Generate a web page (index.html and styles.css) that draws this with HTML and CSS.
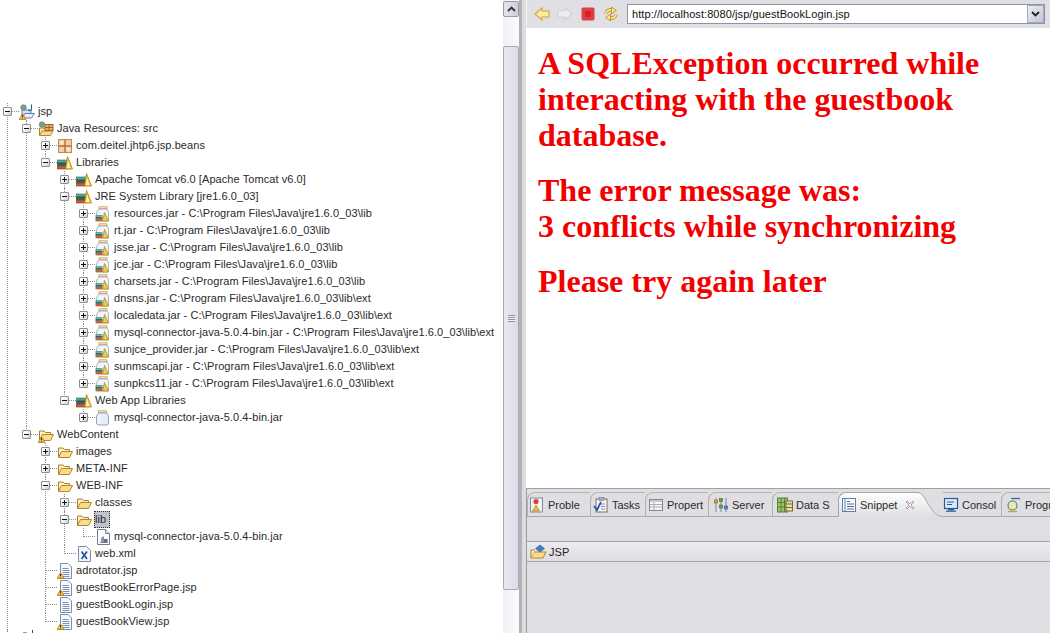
FILE: index.html
```html
<!DOCTYPE html>
<html lang="en">
<head>
<meta charset="utf-8">
<title>Eclipse guestbook</title>
<link rel="stylesheet" href="styles.css">
</head>
<body>
<svg class="defs" width="0" height="0" aria-hidden="true">
  <defs>
    <linearGradient id="tabfill" x1="0" y1="0" x2="0" y2="1"><stop offset="0" stop-color="#ffffff"/><stop offset="1" stop-color="#dfdfe3"/></linearGradient>
    <symbol id="warn" viewBox="0 0 16 16"><path d="M3.5 9.5 L7 15.5 H0z" fill="#f5c33b" stroke="#a8741a" stroke-width=".7"/><path d="M3.5 11v2.2M3.5 14v.7" stroke="#222" stroke-width=".9"/></symbol>
    <symbol id="folder" viewBox="0 0 16 16"><path d="M1.5 13.5 V4 h4.5 l1.5 1.5 h5 V8" fill="#fdf0c0" stroke="#a97f35"/><path d="M1.5 13.5 L4.5 7.5 H15.5 L12.5 13.5z" fill="#fcdc8a" stroke="#b5852f"/></symbol>
    <symbol id="project" viewBox="0 0 16 16"><path d="M3 14 V6 h9 V13z" fill="#cfe0f5" stroke="#6d8cb5"/><path d="M3 14 L6 9.5 H15.5 L12.5 14z" fill="#e9f0fb" stroke="#5f7fb0"/><circle cx="4.5" cy="3.5" r="2.8" fill="#7e9d8f" stroke="#5c7a78" stroke-width=".6"/><path d="M12.5 0.5 V5 a1.5 1.5 0 0 1 -3 .3" fill="none" stroke="#3a5c8c" stroke-width="1.1"/><use href="#warn" x="0" y="0" width="16" height="16"/></symbol>
    <symbol id="srcfolder" viewBox="0 0 16 16"><path d="M1.5 14 V7 h10 V14z" fill="#fdeab0" stroke="#a97f35"/><path d="M1.5 14.5 L4 10 H15 L12.5 14.5z" fill="#fcdc8a" stroke="#b5852f"/><rect x="7" y="3.5" width="8" height="6" fill="#e0b070" stroke="#a0622a"/><path d="M11 3.5v6M7 6.5h8" stroke="#a0622a"/><circle cx="4" cy="3.5" r="2.8" fill="#7e9d8f" stroke="#5c7a78" stroke-width=".6"/></symbol>
    <symbol id="package" viewBox="0 0 16 16"><rect x="1.5" y="1.5" width="13" height="13" fill="#f1d0a4" stroke="#c48a55"/><path d="M8 1.5v13M1.5 8h13" stroke="#b9703a" stroke-width="1.4"/><path d="M3 3h3.5v3.5H3zM9.5 9.5H13V13H9.5z" fill="#f9e8cf"/></symbol>
    <symbol id="library" viewBox="0 0 16 16"><rect x="0.5" y="5" width="9" height="2.6" fill="#54a888" stroke="#2b6a5a" stroke-width=".6"/><rect x="0.5" y="8" width="9" height="2.6" fill="#2f6468" stroke="#1f4048" stroke-width=".6"/><rect x="0.5" y="11" width="9" height="3" fill="#c8602a" stroke="#7a3414" stroke-width=".6"/><path d="M10.5 1.5 L15.5 14 H8.5z" fill="#f3c94a" stroke="#a57d18" stroke-width=".8"/><path d="M11 6 L10 13 h3.5z" fill="#fff2b8"/></symbol>
    <symbol id="jar" viewBox="0 0 16 16"><rect x="4" y="0.8" width="8" height="2" fill="#fbeecb" stroke="#c29c4a" stroke-width=".8"/><path d="M4 3 Q1.5 5 1.5 8 V15 H13.5 V7 Q13.5 4 12 3z" fill="#f3f3fb" stroke="#9aa3b8" stroke-width=".8"/><rect x="0.5" y="9" width="7" height="1.8" fill="#54a888"/><rect x="0.5" y="11" width="7" height="1.8" fill="#2f6468"/><rect x="0.5" y="13" width="7" height="2.2" fill="#c8602a"/><path d="M9.5 6.5 L13.5 15 H7.5z" fill="#f3c94a" stroke="#a57d18" stroke-width=".7"/></symbol>
    <symbol id="plainjar" viewBox="0 0 16 16"><rect x="3.5" y="0.8" width="8" height="2" fill="#fbeecb" stroke="#c29c4a" stroke-width=".8"/><path d="M3.5 3 Q1.5 5 1.5 7 V13 Q1.5 15 4 15 H11 Q13.5 15 13.5 13 V7 Q13.5 5 11.5 3z" fill="#e8eef8" stroke="#8d9cb5" stroke-width=".9"/><path d="M4 6v7" stroke="#fff" stroke-width="1.2"/></symbol>
    <symbol id="jardoc" viewBox="0 0 16 16"><path d="M2.5 .5 H10.5 L14.5 4.5 V15.5 H2.5z" fill="#fdfdff" stroke="#6f7f94"/><path d="M10.5 .5 V4.5 H14.5" fill="#dfe6f0" stroke="#6f7f94"/><path d="M6 13 V9 L9 7 V13z" fill="#8a93a8"/><rect x="9" y="10" width="3.5" height="3" fill="#5f6b85"/><rect x="5" y="13" width="8" height="1" fill="#7a869c"/></symbol>
    <symbol id="xml" viewBox="0 0 16 16"><path d="M2.5 .5 H10.5 L14.5 4.5 V15.5 H2.5z" fill="#f3f7fd" stroke="#7c8fa8"/><path d="M5.5 5.5 L11 13M11 5.5 L5.5 13" stroke="#2b4f9c" stroke-width="1.7"/></symbol>
    <symbol id="jsp" viewBox="0 0 16 16"><path d="M3.5 .5 H11 L14.5 4 V15.5 H3.5z" fill="#f5f8fd" stroke="#7c8fa8"/><path d="M5.5 5.5h6M5.5 7.5h7M5.5 9.5h7M5.5 11.5h7M5.5 13.5h7" stroke="#7d93b5"/></symbol>
    <symbol id="jspwarn" viewBox="0 0 16 16"><use href="#jsp" width="16" height="16"/><use href="#warn" width="16" height="16"/></symbol>
    <symbol id="problems" viewBox="0 0 16 16"><rect x="1.5" y="1" width="12" height="14" fill="#f2f3f8" stroke="#7f8aa0"/><circle cx="7" cy="4.5" r="2.6" fill="#d8453a"/><path d="M7 8 L10.5 14 H3.5z" fill="#f1b73a" stroke="#a8741a" stroke-width=".6"/></symbol>
    <symbol id="tasks" viewBox="0 0 16 16"><rect x="3" y="2" width="11" height="13" fill="#f5f6fb" stroke="#8a6f4a"/><rect x="6" y="0.5" width="5" height="3" fill="#a5afbf" stroke="#6d7686" stroke-width=".6"/><path d="M8 7h4M8 9.5h4M8 12h4" stroke="#8292aa"/><path d="M1 9 L4 13 L8 5" fill="none" stroke="#2a52b0" stroke-width="1.8"/></symbol>
    <symbol id="props" viewBox="0 0 16 16"><rect x="1.5" y="2.5" width="13" height="11" fill="#f6f6f8" stroke="#7d8590"/><rect x="2" y="3" width="12" height="2" fill="#c5cad4"/><path d="M2 7.5h12M2 10h12M6 5v8" stroke="#a8adb8"/></symbol>
    <symbol id="server" viewBox="0 0 16 16"><path d="M3 1v14M8 1v14M13 1v14" stroke="#7d8596" stroke-width="1"/><rect x="1.5" y="3" width="3" height="3" fill="#f0a030" stroke="#85601c" stroke-width=".6"/><rect x="6.5" y="1.5" width="3" height="3" fill="#6fa050" stroke="#3f6a2a" stroke-width=".6"/><rect x="6.5" y="8" width="3" height="3" fill="#6fa050" stroke="#3f6a2a" stroke-width=".6"/><rect x="11.5" y="9" width="3" height="3" fill="#4a86d0" stroke="#2a5a9a" stroke-width=".6"/></symbol>
    <symbol id="datasrc" viewBox="0 0 16 16"><rect x="0.5" y="1" width="10" height="14" fill="#9cc46a" stroke="#54803a"/><path d="M4 1v14M7.5 1v14M.5 5.5h10M.5 10h10" stroke="#54803a"/><rect x="9" y="4" width="6.5" height="10" fill="#e8dfa8" stroke="#7a6a30"/><path d="M9 7h6.5M9 10.5h6.5" stroke="#7a6a30"/></symbol>
    <symbol id="snippet" viewBox="0 0 16 16"><rect x="1.5" y="1.5" width="13" height="13" fill="#fafcff" stroke="#5c7fa8"/><path d="M4 1.5v13" stroke="#5c7fa8"/><path d="M6 4.5h3M6 7h7M6 9.5h7M6 12h7" stroke="#5a6a82"/></symbol>
    <symbol id="console" viewBox="0 0 16 16"><rect x="1.5" y="1.5" width="13" height="10" fill="#dfe9f8" stroke="#2a5a96" stroke-width="1.2"/><path d="M4 5h7M4 7.5h5" stroke="#2a5a96"/><rect x="5" y="12" width="6" height="1.5" fill="#2a5a96"/><rect x="3" y="13.5" width="10" height="1.5" fill="#4a76aa"/></symbol>
    <symbol id="progress" viewBox="0 0 16 16"><path d="M5 1.5h9M7 .5v2M10 .5v2M13 .5v2" stroke="#3a66a8"/><circle cx="6.5" cy="8.5" r="4.5" fill="#f4e6b0" stroke="#3f8a8a" stroke-width="1.2"/><path d="M2 14.5h9" stroke="#c9a23a" stroke-width="1.4"/></symbol>
    <symbol id="pers" viewBox="0 0 18 16"><path d="M1 14 L4 8 H16 L13 14z" fill="#fcdc8a" stroke="#b5852f"/><path d="M1 14 V6 H5" fill="#fdf0c0" stroke="#a97f35"/><path d="M10 1 L14.5 4.5 L10 8 L5.5 4.5z" fill="#3f7fc8" stroke="#2a5a96" stroke-width=".6"/></symbol>
  </defs>
</svg>
<div class="layout">
  <section class="explorer">
    <ul class="tree">
      <li><div class="row"><span class="toggle open"></span><svg class="icon"><use href="#project"/></svg><span class="label">jsp</span></div>
        <ul>
          <li><div class="row"><span class="toggle open"></span><svg class="icon"><use href="#srcfolder"/></svg><span class="label">Java Resources: src</span></div>
            <ul>
              <li><div class="row"><span class="toggle"></span><svg class="icon"><use href="#package"/></svg><span class="label">com.deitel.jhtp6.jsp.beans</span></div></li>
              <li><div class="row"><span class="toggle open"></span><svg class="icon"><use href="#library"/></svg><span class="label">Libraries</span></div>
                <ul>
                  <li><div class="row"><span class="toggle"></span><svg class="icon"><use href="#library"/></svg><span class="label">Apache Tomcat v6.0 [Apache Tomcat v6.0]</span></div></li>
                  <li><div class="row"><span class="toggle open"></span><svg class="icon"><use href="#library"/></svg><span class="label">JRE System Library [jre1.6.0_03]</span></div>
                    <ul>
                      <li><div class="row"><span class="toggle"></span><svg class="icon"><use href="#jar"/></svg><span class="label">resources.jar - C:\Program Files\Java\jre1.6.0_03\lib</span></div></li>
                      <li><div class="row"><span class="toggle"></span><svg class="icon"><use href="#jar"/></svg><span class="label">rt.jar - C:\Program Files\Java\jre1.6.0_03\lib</span></div></li>
                      <li><div class="row"><span class="toggle"></span><svg class="icon"><use href="#jar"/></svg><span class="label">jsse.jar - C:\Program Files\Java\jre1.6.0_03\lib</span></div></li>
                      <li><div class="row"><span class="toggle"></span><svg class="icon"><use href="#jar"/></svg><span class="label">jce.jar - C:\Program Files\Java\jre1.6.0_03\lib</span></div></li>
                      <li><div class="row"><span class="toggle"></span><svg class="icon"><use href="#jar"/></svg><span class="label">charsets.jar - C:\Program Files\Java\jre1.6.0_03\lib</span></div></li>
                      <li><div class="row"><span class="toggle"></span><svg class="icon"><use href="#jar"/></svg><span class="label">dnsns.jar - C:\Program Files\Java\jre1.6.0_03\lib\ext</span></div></li>
                      <li><div class="row"><span class="toggle"></span><svg class="icon"><use href="#jar"/></svg><span class="label">localedata.jar - C:\Program Files\Java\jre1.6.0_03\lib\ext</span></div></li>
                      <li><div class="row"><span class="toggle"></span><svg class="icon"><use href="#jar"/></svg><span class="label">mysql-connector-java-5.0.4-bin.jar - C:\Program Files\Java\jre1.6.0_03\lib\ext</span></div></li>
                      <li><div class="row"><span class="toggle"></span><svg class="icon"><use href="#jar"/></svg><span class="label">sunjce_provider.jar - C:\Program Files\Java\jre1.6.0_03\lib\ext</span></div></li>
                      <li><div class="row"><span class="toggle"></span><svg class="icon"><use href="#jar"/></svg><span class="label">sunmscapi.jar - C:\Program Files\Java\jre1.6.0_03\lib\ext</span></div></li>
                      <li><div class="row"><span class="toggle"></span><svg class="icon"><use href="#jar"/></svg><span class="label">sunpkcs11.jar - C:\Program Files\Java\jre1.6.0_03\lib\ext</span></div></li>
                    </ul>
                  </li>
                  <li><div class="row"><span class="toggle open"></span><svg class="icon"><use href="#library"/></svg><span class="label">Web App Libraries</span></div>
                    <ul>
                      <li><div class="row"><span class="toggle"></span><svg class="icon"><use href="#plainjar"/></svg><span class="label">mysql-connector-java-5.0.4-bin.jar</span></div></li>
                    </ul>
                  </li>
                </ul>
              </li>
            </ul>
          </li>
          <li><div class="row"><span class="toggle open"></span><svg class="icon"><use href="#folder"/><use href="#warn"/></svg><span class="label">WebContent</span></div>
            <ul>
              <li><div class="row"><span class="toggle"></span><svg class="icon"><use href="#folder"/></svg><span class="label">images</span></div></li>
              <li><div class="row"><span class="toggle"></span><svg class="icon"><use href="#folder"/></svg><span class="label">META-INF</span></div></li>
              <li><div class="row"><span class="toggle open"></span><svg class="icon"><use href="#folder"/></svg><span class="label">WEB-INF</span></div>
                <ul>
                  <li><div class="row"><span class="toggle"></span><svg class="icon"><use href="#folder"/></svg><span class="label">classes</span></div></li>
                  <li><div class="row"><span class="toggle open"></span><svg class="icon"><use href="#folder"/></svg><span class="label selected">lib</span></div>
                    <ul>
                      <li><div class="row"><span class="stub"></span><svg class="icon"><use href="#jardoc"/></svg><span class="label">mysql-connector-java-5.0.4-bin.jar</span></div></li>
                    </ul>
                  </li>
                  <li><div class="row"><span class="stub"></span><svg class="icon"><use href="#xml"/></svg><span class="label">web.xml</span></div></li>
                </ul>
              </li>
              <li><div class="row"><span class="stub"></span><svg class="icon"><use href="#jspwarn"/></svg><span class="label">adrotator.jsp</span></div></li>
              <li><div class="row"><span class="stub"></span><svg class="icon"><use href="#jspwarn"/></svg><span class="label">guestBookErrorPage.jsp</span></div></li>
              <li><div class="row"><span class="stub"></span><svg class="icon"><use href="#jsp"/></svg><span class="label">guestBookLogin.jsp</span></div></li>
              <li><div class="row"><span class="stub"></span><svg class="icon"><use href="#jspwarn"/></svg><span class="label">guestBookView.jsp</span></div></li>
            </ul>
          </li>
        </ul>
      </li>
      <li class="cutoff"><span class="cutoff-box"></span><span class="cutoff-bar"></span></li>
    </ul>
  </section>

  <div class="vscroll">
    <div class="sb-btn"><svg width="9" height="6" viewBox="0 0 9 6"><path d="M1 5 L4.5 1.5 L8 5" fill="none" stroke="#333" stroke-width="1.8"/></svg></div>
    <div class="sb-track-top"></div>
    <div class="sb-thumb"><span class="grip"></span></div>
  </div>
  <div class="sash"></div>

  <main class="right">
    <div class="toolbar">
      <svg class="tb-icon" viewBox="0 0 16 16"><path d="M1 8 L8 2 V5 H15 V11 H8 V14z" fill="#fde9a0" stroke="#d2a63a" stroke-width="1.1"/></svg>
      <svg class="tb-icon" viewBox="0 0 16 16"><path d="M15 8 L8 2 V5 H1 V11 H8 V14z" fill="#eceef0" stroke="#cfd1d4" stroke-width="1.1"/></svg>
      <svg class="tb-icon" viewBox="0 0 16 16"><rect x="2" y="2" width="12" height="12" rx="1" fill="#e8393f" stroke="#c2474c"/><rect x="5" y="5" width="6" height="6" fill="#d5202a"/></svg>
      <svg class="tb-icon" viewBox="0 0 16 16"><path d="M3 7.5 C3.5 4.5 6.5 3 9 4.5" fill="none" stroke="#b8902c" stroke-width="3.6"/><path d="M3 7.5 C3.5 4.5 6.5 3 9 4.5" fill="none" stroke="#fbe38c" stroke-width="2"/><path d="M8.5 1 L13.5 4.5 L8.5 8z" fill="#fbe38c" stroke="#b8902c" stroke-width=".9"/><path d="M13 8.5 C12.5 11.5 9.5 13 7 11.5" fill="none" stroke="#b8902c" stroke-width="3.6"/><path d="M13 8.5 C12.5 11.5 9.5 13 7 11.5" fill="none" stroke="#fbe38c" stroke-width="2"/><path d="M7.5 8 L2.5 11.5 L7.5 15z" fill="#fbe38c" stroke="#b8902c" stroke-width=".9"/></svg>
      <div class="url">
        <span class="url-text">http://localhost:8080/jsp/guestBookLogin.jsp</span>
        <span class="url-drop"><svg width="9" height="6" viewBox="0 0 9 6"><path d="M1 1 L4.5 4.5 L8 1" fill="none" stroke="#222" stroke-width="1.8"/></svg></span>
      </div>
    </div>
    <div class="page">
      <h1>A SQLException occurred while interacting with the guestbook database.</h1>
      <h1>The error message was:<br>3 conflicts while synchronizing</h1>
      <h1>Please try again later</h1>
    </div>
    <div class="bottom">
      <div class="tabs">
        <div class="tab t-prob"><svg class="ticon"><use href="#problems"/></svg>Proble</div>
        <div class="tab t-task"><svg class="ticon"><use href="#tasks"/></svg>Tasks</div>
        <div class="tab t-prop"><svg class="ticon"><use href="#props"/></svg>Propert</div>
        <div class="tab t-serv"><svg class="ticon"><use href="#server"/></svg>Server</div>
        <div class="tab t-data"><svg class="ticon"><use href="#datasrc"/></svg>Data S</div>
        <div class="tab t-snip active"><svg class="ticon"><use href="#snippet"/></svg>Snippet<svg class="close" viewBox="0 0 10 10"><path d="M1 2 L2 1 L5 4 L8 1 L9 2 L6 5 L9 8 L8 9 L5 6 L2 9 L1 8 L4 5z" fill="#fff" stroke="#8a8a92" stroke-width=".8"/></svg></div>
        <svg class="curve" viewBox="0 0 26 25" preserveAspectRatio="none"><path d="M0 .5 C10 .5 12 24.5 26 24.5 V25 H0z" fill="url(#tabfill)"/><path d="M0 .5 C10 .5 12 24.5 26 24.5" fill="none" stroke="#a5a5ab"/></svg>
        <div class="tab t-cons"><svg class="ticon"><use href="#console"/></svg>Consol</div>
        <div class="tab t-prog"><svg class="ticon"><use href="#progress"/></svg>Progr</div>
      </div>
      <div class="drawer-area">
        <div class="drawer"><svg class="dicon"><use href="#pers"/></svg><span class="drawer-label">JSP</span></div>
      </div>
    </div>
  </main>
</div>
</body>
</html>
```

FILE: styles.css
```css
* { box-sizing: border-box; }
html, body { margin: 0; padding: 0; height: 100%; overflow: hidden; background: #fff; }
body { font-family: "Liberation Sans", Arial, sans-serif; font-size: 11px; letter-spacing: .07px; color: #222; }
.defs { position: absolute; }
.layout { display: flex; height: 633px; overflow: hidden; }

/* tree */
.explorer { width: 503px; flex: none; padding-top: 103px; overflow: hidden; background: #fff; }
.tree, .tree ul { list-style: none; margin: 0; padding: 0; }
.tree ul { padding-left: 19px; }
.tree li { position: relative; }
.tree li::before { content: ""; position: absolute; left: 7px; top: 0; bottom: 0; border-left: 1px dotted #8e8e8e; }
.tree ul > li:last-child::before { bottom: auto; height: 9px; }
.row { position: relative; display: flex; align-items: center; height: 17px; white-space: nowrap; }
.row::before { content: ""; position: absolute; left: 8px; width: 11px; top: 8px; border-top: 1px dotted #8e8e8e; }
.toggle { position: relative; z-index: 1; flex: none; width: 9px; height: 9px; margin-left: 3px; margin-right: 7px; border: 1px solid #8f8f8f; border-radius: 1px; background: linear-gradient(135deg, #fff 30%, #cfcfd6); }
.toggle::before { content: ""; position: absolute; left: 1px; top: 3px; width: 5px; height: 1px; background: #111; }
.toggle:not(.open)::after { content: ""; position: absolute; left: 3px; top: 1px; width: 1px; height: 5px; background: #111; }
.stub { flex: none; width: 19px; }
.icon { position: relative; z-index: 1; flex: none; width: 16px; height: 16px; margin-right: 3px; }
.label { line-height: 17px; color: #2a2a2a; }
.label.selected { margin-left: -1px; padding: 0 4px 0 1px; background: #c3c3cb; outline: 1px dotted #333; outline-offset: -1px; }
.tree li.cutoff { height: 4px; }
.cutoff-box { position: absolute; left: 22px; top: 2px; width: 6px; height: 6px; border: 1px solid #999; border-radius: 2px; }
.cutoff-bar { position: absolute; left: 32px; top: 0; width: 1px; height: 4px; background: #444; }

/* scrollbar */
.vscroll { width: 16px; flex: none; display: flex; flex-direction: column; background: linear-gradient(90deg, #f0f0f6, #fbfbfe); }
.sb-btn { height: 16px; margin-top: 1px; display: flex; align-items: center; justify-content: center; background: linear-gradient(90deg, #e4e4ee, #cfd0dc); border: 1px solid #9a9aa6; border-radius: 2px; }
.sb-track-top { height: 29px; }
.sb-thumb { height: 544px; display: flex; align-items: center; justify-content: center; background: linear-gradient(90deg, #e8e8f2, #dcdce8); border: 1px solid #a8a8b4; border-radius: 2px; }
.grip { width: 7px; height: 7px; background: repeating-linear-gradient(180deg, #8f8f9c 0 1px, #f4f4fa 1px 2px); }
.sash { width: 7px; flex: none; background: linear-gradient(90deg, #b2b2b6 0 3px, #dddde0 3px 100%); }

/* right */
.right { flex: 1; min-width: 0; display: flex; flex-direction: column; }
.toolbar { height: 28px; flex: none; display: flex; align-items: center; gap: 7px; padding-left: 7px; background: #e0dfe3; border-left: 1px solid #f2f2f4; }
.tb-icon { width: 16px; height: 16px; flex: none; }
.url { margin-left: 1px; width: 418px; height: 20px; display: flex; align-items: center; justify-content: space-between; background: #fff; border: 1px solid #8c95a4; padding-left: 4px; }
.url-text { font-size: 11px; color: #111; }
.url-drop { width: 17px; height: 18px; display: flex; align-items: center; justify-content: center; background: linear-gradient(135deg, #eceff6, #c3c6d6); border: 1px solid #a5a8b8; }

.page { flex: 1; min-height: 0; padding: 17px 12px 0; background: #fff; letter-spacing: 0; }
.page h1 { margin: 0 0 19px; font-family: "Liberation Serif", "Times New Roman", serif; font-size: 32px; line-height: 36px; font-weight: bold; color: #f20000; }

/* bottom */
.bottom { flex: none; height: 145px; display: flex; flex-direction: column; background: #dfdfe3; border-top: 1px solid #a0a0a4; border-left: 1px solid #9c9ca0; }
.tabs { margin-top: 3px; height: 25px; flex: none; display: flex; border-bottom: 1px solid #a8a8ae; letter-spacing: 0; }
.tab { flex: none; height: 25px; display: flex; align-items: center; gap: 3px; padding-left: 2px; border-top: 1px solid #b5b5bb; border-left: 1px solid #b0b0b6; border-top-left-radius: 8px; color: #2a2a2a; white-space: nowrap; }
.ticon { width: 16px; height: 16px; flex: none; }
.t-prob { width: 63px; padding-left: 1px; }
.t-task { width: 55px; }
.t-prop { width: 63px; }
.t-serv { width: 64px; padding-left: 4px; }
.t-data { width: 66px; padding-left: 4px; }
.t-snip { width: 79px; }
.t-cons { width: 58px; border-left: 0; border-top-left-radius: 0; padding-left: 0; }
.t-prog { flex: 1; padding-left: 4px; }
.tab.active { background: linear-gradient(180deg, #fff, #dfdfe3); border-top-color: #a5a5ab; border-left-color: #a5a5ab; }
.close { width: 10px; height: 10px; flex: none; margin-left: 5px; }
.curve { width: 26px; height: 25px; flex: none; }
.drawer-area { flex: 1; padding-top: 24px; }
.drawer { height: 21px; display: flex; align-items: center; padding-left: 3px; border-top: 1px solid #a4a4a8; border-bottom: 1px solid #a4a4a8; background: linear-gradient(180deg, #ececf0, #dedee2); }
.dicon { width: 18px; height: 16px; flex: none; }
.drawer-label { margin-left: 1px; }
```
